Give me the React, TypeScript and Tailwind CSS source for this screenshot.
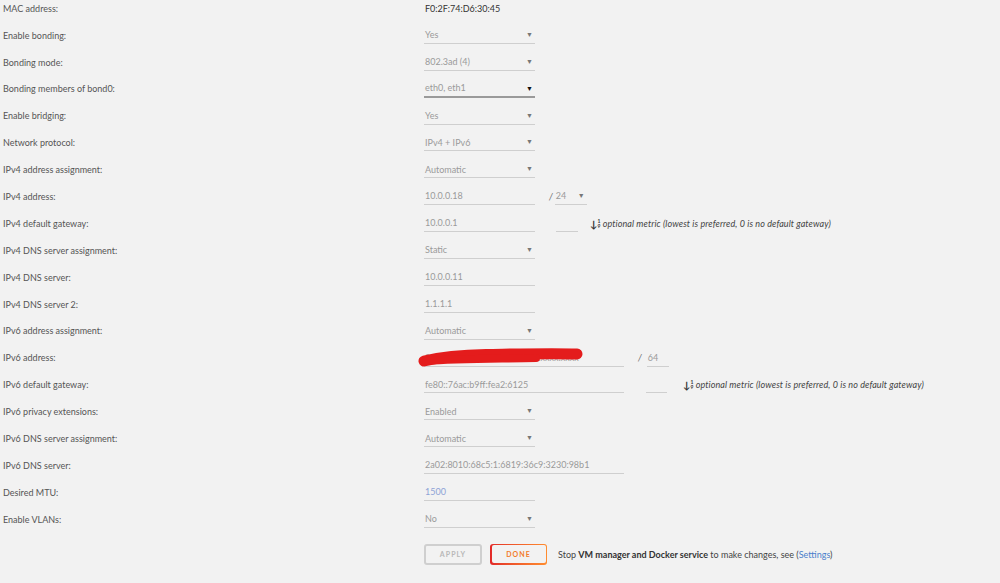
import React from 'react';

type Field =
  | { kind: 'text'; value: string }
  | { kind: 'select'; value: string; active?: boolean }
  | { kind: 'input'; value: string; wide?: boolean; blue?: boolean }
  | { kind: 'ipv4addr' }
  | { kind: 'ipv4gw' }
  | { kind: 'ipv6addr' }
  | { kind: 'ipv6gw' };

const rows: { label: string; field: Field }[] = [
  { label: 'MAC address:', field: { kind: 'text', value: 'F0:2F:74:D6:30:45' } },
  { label: 'Enable bonding:', field: { kind: 'select', value: 'Yes' } },
  { label: 'Bonding mode:', field: { kind: 'select', value: '802.3ad (4)' } },
  { label: 'Bonding members of bond0:', field: { kind: 'select', value: 'eth0, eth1', active: true } },
  { label: 'Enable bridging:', field: { kind: 'select', value: 'Yes' } },
  { label: 'Network protocol:', field: { kind: 'select', value: 'IPv4 + IPv6' } },
  { label: 'IPv4 address assignment:', field: { kind: 'select', value: 'Automatic' } },
  { label: 'IPv4 address:', field: { kind: 'ipv4addr' } },
  { label: 'IPv4 default gateway:', field: { kind: 'ipv4gw' } },
  { label: 'IPv4 DNS server assignment:', field: { kind: 'select', value: 'Static' } },
  { label: 'IPv4 DNS server:', field: { kind: 'input', value: '10.0.0.11' } },
  { label: 'IPv4 DNS server 2:', field: { kind: 'input', value: '1.1.1.1' } },
  { label: 'IPv6 address assignment:', field: { kind: 'select', value: 'Automatic' } },
  { label: 'IPv6 address:', field: { kind: 'ipv6addr' } },
  { label: 'IPv6 default gateway:', field: { kind: 'ipv6gw' } },
  { label: 'IPv6 privacy extensions:', field: { kind: 'select', value: 'Enabled' } },
  { label: 'IPv6 DNS server assignment:', field: { kind: 'select', value: 'Automatic' } },
  { label: 'IPv6 DNS server:', field: { kind: 'input', value: '2a02:8010:68c5:1:6819:36c9:3230:98b1', wide: true } },
  { label: 'Desired MTU:', field: { kind: 'input', value: '1500', blue: true } },
  { label: 'Enable VLANs:', field: { kind: 'select', value: 'No' } },
];

function Caret({ dark }: { dark?: boolean }) {
  return (
    <span className={`absolute right-[2px] top-[4px] text-[7px] leading-none ${dark ? 'text-[#111]' : 'text-[#777]'}`}>▼</span>
  );
}

function Select({ value, active, w = 'w-[111px]' }: { value: string; active?: boolean; w?: string }) {
  return (
    <div className={`relative h-[17px] ${w} flex items-center pl-[1px] ${active ? 'border-b-2 border-[#9a9a9a]' : 'border-b border-[#cfcfcf]'}`}>
      <span className="text-[#9a9a9a]">{value}</span>
      <Caret dark={active} />
    </div>
  );
}

function Input({ value, w = 'w-[111px]', blue }: { value: string; w?: string; blue?: boolean }) {
  return (
    <div className={`h-[17px] ${w} flex items-center pl-[1px] border-b border-[#cfcfcf]`}>
      <span className={blue ? 'text-[#8ea2d6]' : 'text-[#9a9a9a]'}>{value}</span>
    </div>
  );
}

function Metric() {
  return (
    <span className="flex items-center text-[#444] italic tracking-[0.1px]">
      <span className="flex items-center mr-[2px] not-italic">
        <span className="font-bold text-[10px] leading-none text-[#333]">↓</span>
        <span className="flex flex-col text-[5px] leading-[5px] font-bold text-[#333]">
          <span>1</span>
          <span>9</span>
        </span>
      </span>
      optional metric (lowest is preferred, 0 is no default gateway)
    </span>
  );
}

// redaction marker drawn over the ipv6 address
function Scribble() {
  return (
    <svg className="absolute left-[-8px] top-[-5px]" width="175" height="24" viewBox="0 0 175 24">
      <path
        d="M8 16 C 25 12, 45 10, 70 9.5 C 100 9, 135 8, 161 9"
        stroke="#e41c1c"
        strokeWidth="11"
        strokeLinecap="round"
        fill="none"
      />
      <path d="M10 16 C 40 14, 70 14, 120 13" stroke="#e41c1c" strokeWidth="8" strokeLinecap="round" fill="none" />
    </svg>
  );
}

function FieldView({ field }: { field: Field }) {
  switch (field.kind) {
    case 'text':
      return <div className="h-[17px] flex items-center pl-[1px] text-[#333]">{field.value}</div>;
    case 'select':
      return <Select value={field.value} active={field.active} />;
    case 'input':
      return <Input value={field.value} w={field.wide ? 'w-[200px]' : 'w-[111px]'} blue={field.blue} />;
    case 'ipv4addr':
      return (
        <div className="flex items-start">
          <Input value="10.0.0.18" />
          <span className="h-[17px] flex items-center ml-[14px] mr-[2px] italic text-[#666]">/</span>
          <Select value="24" w="w-[32px]" />
        </div>
      );
    case 'ipv4gw':
      return (
        <div className="flex items-start">
          <Input value="10.0.0.1" />
          <div className="ml-[21px]"><Input value="" w="w-[22px]" /></div>
          <div className="h-[17px] flex items-center ml-[12px]"><Metric /></div>
        </div>
      );
    case 'ipv6addr':
      return (
        <div className="flex items-start">
          <div className="relative">
            <Input value="2a02:8010:68c5:1:xxxx:xxxx:xxxx:xxxx" w="w-[200px]" />
            <Scribble />
          </div>
          <span className="h-[17px] flex items-center ml-[14px] mr-[5px] italic text-[#666]">/</span>
          <Input value="64" w="w-[22px]" />
        </div>
      );
    case 'ipv6gw':
      return (
        <div className="flex items-start">
          <Input value="fe80::76ac:b9ff:fea2:6125" w="w-[200px]" />
          <div className="ml-[22px]"><Input value="" w="w-[21px]" /></div>
          <div className="h-[17px] flex items-center ml-[16px]"><Metric /></div>
        </div>
      );
  }
}

export default function App() {
  return (
    <div className="w-[1000px] h-[583px] overflow-hidden bg-[#f2f2f2] text-[9px] text-[#555]" style={{ fontFamily: 'Lato, "Open Sans", sans-serif' }}>
      <div className="flex flex-col">
        {rows.map((r) => (
          <div key={r.label} className="flex items-start h-[26.9px]">
            <div className="w-[424px] pl-[3px] h-[17px] flex items-center">{r.label}</div>
            <FieldView field={r.field} />
          </div>
        ))}
      </div>
      <div className="flex items-center mt-[6px] pl-[424px]">
        <button className="w-[58px] h-[21px] rounded-[3px] border-2 border-[#cfcfcf] text-[#b8b8b8] text-[7px] font-bold tracking-[0.15em]">
          APPLY
        </button>
        <div className="ml-[8px] p-[1.5px] rounded-[3px] bg-gradient-to-r from-[#e22828] to-[#ff8c2f]">
          <button className="w-[54px] h-[18px] rounded-[2px] bg-[#f2f2f2] text-[#f27c2b] text-[7px] font-bold tracking-[0.15em]">
            DONE
          </button>
        </div>
        <span className="ml-[11px] text-[#444]">
          Stop <b className="text-[#333]">VM manager and Docker service</b> to make changes, see (<span className="text-[#4a7fcb]">Settings</span>)
        </span>
      </div>
    </div>
  );
}
